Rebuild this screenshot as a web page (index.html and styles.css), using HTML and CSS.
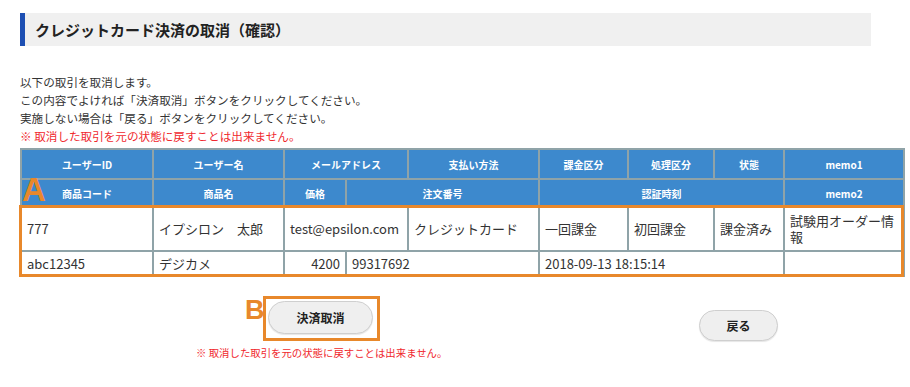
FILE: index.html
```html
<!DOCTYPE html>
<html lang="ja">
<head>
    <meta charset="UTF-8">
    <title>クレジットカード決済の取消（確認）</title>
    <link rel="stylesheet" href="styles.css">
</head>
<body>
    <div class="page">
        <h1 class="page-title">クレジットカード決済の取消（確認）</h1>

        <div class="intro">
            <p>以下の取引を取消します。</p>
            <p>この内容でよければ「決済取消」ボタンをクリックしてください。</p>
            <p>実施しない場合は「戻る」ボタンをクリックしてください。</p>
            <p class="warn">※ 取消した取引を元の状態に戻すことは出来ません。</p>
        </div>

        <div class="table-wrap">
            <table class="order-table">
                <colgroup>
                    <col style="width:132px">
                    <col style="width:131px">
                    <col style="width:62px">
                    <col style="width:62px">
                    <col style="width:131px">
                    <col style="width:89px">
                    <col style="width:86px">
                    <col style="width:70px">
                    <col style="width:120px">
                </colgroup>
                <thead>
                    <tr class="head-1">
                        <th>ユーザーID</th>
                        <th>ユーザー名</th>
                        <th colspan="2">メールアドレス</th>
                        <th>支払い方法</th>
                        <th>課金区分</th>
                        <th>処理区分</th>
                        <th>状態</th>
                        <th>memo1</th>
                    </tr>
                    <tr class="head-2">
                        <th>商品コード</th>
                        <th>商品名</th>
                        <th>価格</th>
                        <th colspan="2">注文番号</th>
                        <th colspan="3">認証時刻</th>
                        <th>memo2</th>
                    </tr>
                </thead>
                <tbody>
                    <tr class="row-1">
                        <td>777</td>
                        <td>イプシロン　太郎</td>
                        <td colspan="2">test@epsilon.com</td>
                        <td>クレジットカード</td>
                        <td>一回課金</td>
                        <td>初回課金</td>
                        <td>課金済み</td>
                        <td>試験用オーダー情報</td>
                    </tr>
                    <tr class="row-2">
                        <td>abc12345</td>
                        <td>デジカメ</td>
                        <td class="num">4200</td>
                        <td colspan="2">99317692</td>
                        <td colspan="3">2018-09-13 18:15:14</td>
                        <td></td>
                    </tr>
                </tbody>
            </table>
            <div class="mark-box table-mark"></div>
            <span class="mark-label label-a">A</span>
        </div>

        <div class="actions">
            <div class="action-main">
                <div class="btn-mark">
                    <span class="mark-label label-b">B</span>
                    <button class="btn">決済取消</button>
                </div>
                <p class="note">※ 取消した取引を元の状態に戻すことは出来ません。</p>
            </div>
            <div class="action-back">
                <button class="btn btn-back">戻る</button>
            </div>
        </div>
    </div>
</body>
</html>
```

FILE: styles.css
```css
* {
    margin: 0;
    padding: 0;
    box-sizing: border-box;
}

body {
    background: #fff;
    color: #333;
    font-family: "Noto Sans CJK JP", "DejaVu Sans", sans-serif;
}

.page {
    width: 910px;
    padding: 13px 0 0 20px;
}

.page-title {
    width: 851px;
    height: 33px;
    background: #f0f0f0;
    border-left: 5px solid #1d4fb3;
    padding-left: 10px;
    font-size: 15px;
    font-weight: bold;
    line-height: 33px;
    color: #222;
}

.intro {
    margin-top: 27px;
    font-size: 11.6px;
    line-height: 18px;
    color: #333;
}

.warn {
    color: #f0282d;
}

.table-wrap {
    position: relative;
    width: 883px;
    margin-top: 3px;
}

.order-table {
    width: 883px;
    table-layout: fixed;
    border-collapse: collapse;
    border: 2px solid #8fa3a8;
}

.order-table th,
.order-table td {
    border: 2px solid #8fa3a8;
}

.order-table th {
    background: #3d89cd;
    color: #fff;
    font-size: 10px;
    font-weight: bold;
    text-align: center;
}

.head-1 th {
    height: 30px;
}

.head-2 th {
    height: 28px;
}

.order-table td {
    font-size: 13px;
    line-height: 16px;
    padding: 0 5px;
    color: #333;
    background: #fff;
}

.row-1 td {
    height: 44px;
}

.row-2 td {
    height: 25px;
}

.order-table .num {
    text-align: right;
}

.mark-box {
    position: absolute;
    border: 3px solid #e8882b;
}

.table-mark {
    left: -1px;
    top: 57px;
    width: 885px;
    height: 72px;
}

.mark-label {
    position: absolute;
    color: #e8882b;
    font-family: "Liberation Sans", sans-serif;
    font-weight: bold;
}

.label-a {
    left: 2px;
    top: 25px;
    font-size: 33px;
    line-height: 33px;
}

.actions {
    display: flex;
    margin-top: 19px;
}

.action-main {
    margin-left: 176px;
    width: 270px;
}

.btn-mark {
    position: relative;
    width: 117px;
    height: 45px;
    margin-left: 67px;
    border: 3px solid #e8882b;
    padding: 2px;
}

.label-b {
    left: -21px;
    top: -2px;
    font-size: 27px;
    line-height: 27px;
}

.btn {
    display: block;
    width: 105px;
    height: 33px;
    border: 1px solid #cfcfcf;
    border-radius: 17px;
    background: #efefef;
    box-shadow: 0 1px 1px rgba(0, 0, 0, 0.1);
    font-family: "Noto Sans CJK JP", sans-serif;
    font-size: 12px;
    font-weight: bold;
    color: #222;
}

.note {
    margin-top: 5px;
    font-size: 10.4px;
    line-height: 14px;
    color: #f0282d;
}

.action-back {
    margin-left: 233px;
    padding-top: 14px;
}

.btn-back {
    width: 79px;
    height: 31px;
}
```
